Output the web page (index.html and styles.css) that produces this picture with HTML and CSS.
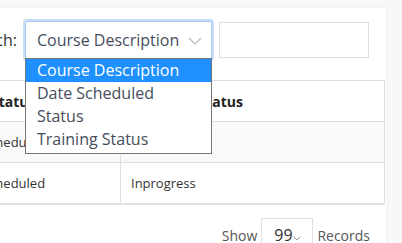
FILE: index.html
```html
<!DOCTYPE html>
<html lang="en">
<head>
    <meta charset="UTF-8">
    <meta name="viewport" content="width=device-width, initial-scale=1.0">
    <title>Training Records</title>
    <link rel="stylesheet" href="styles.css">
</head>
<body>

    <div class="card">
        <div class="search-row">
            <label class="search-label" for="searchText">Search:</label>
            <div class="select-wrap">
                <div class="select-box">
                    <span>Course Description</span>
                    <svg class="chevron" width="14" height="8" viewBox="0 0 14 8"><path d="M1 1 L7 7 L13 1" fill="none" stroke="#b5bcc6" stroke-width="1.2"/></svg>
                </div>
                <ul class="options">
                    <li class="selected">Course Description</li>
                    <li>Date Scheduled</li>
                    <li>Status</li>
                    <li>Training Status</li>
                </ul>
            </div>
            <input type="text" id="searchText" class="search-input">
        </div>

        <table class="records">
            <thead>
                <tr>
                    <th class="col-status">Status</th>
                    <th>Training Status</th>
                </tr>
            </thead>
            <tbody>
                <tr class="odd">
                    <td>Scheduled</td>
                    <td></td>
                </tr>
                <tr>
                    <td>Scheduled</td>
                    <td>Inprogress</td>
                </tr>
            </tbody>
        </table>

        <div class="footer">
            <span>Show</span>
            <div class="page-size">99<svg width="8" height="5" viewBox="0 0 8 5"><path d="M0.5 0.5 L4 4 L7.5 0.5" fill="none" stroke="#999" stroke-width="1"/></svg></div>
            <span>Records</span>
        </div>
    </div>

</body>
</html>
```

FILE: styles.css
```css
body {
    margin: 0;
    background-color: #f8f8f8;
    font-family: "Open Sans", Arial, sans-serif;
    color: #333;
    overflow: hidden;
}
.card {
    background: white;
    margin: 8px 16px 0 -40px;
    box-shadow: 0px 0px 6px rgba(0, 0, 0, 0.04);
}
.search-row {
    display: flex;
    align-items: center;
    padding: 13px 17px 21px 0;
}
.search-label {
    font-size: 16px;
    color: #333;
    margin-left: -2px;
    width: 60px;
    text-align: right;
}
.select-wrap {
    position: relative;
    margin-left: 8px;
}
.select-box {
    height: 36px;
    border: 1px solid #a9c8ee;
    border-radius: 2px;
    box-shadow: 0 0 0 2px #c6def8;
    display: flex;
    align-items: center;
    justify-content: space-between;
    padding: 0 9px 0 11px;
    box-sizing: content-box;
    width: 165px;
    font-size: 16px;
    color: #454d5a;
}
.chevron {
    margin-top: 1px;
}
.options {
    position: absolute;
    top: 37px;
    left: 0;
    width: 185px;
    margin: 0;
    padding: 0 0 2px 0;
    list-style: none;
    background: white;
    border: 1px solid #767676;
    font-size: 16px;
    color: #454d5a;
    z-index: 2;
}
.options li {
    height: 23px;
    line-height: 23px;
    padding-left: 11px;
}
.options .selected {
    background: #1e90ff;
    color: white;
}
.search-input {
    margin-left: 7px;
    width: 148px;
    height: 34px;
    padding: 0;
    border: 1px solid #e0e0e0;
}
.records {
    width: calc(100% - 1px);
    border-collapse: collapse;
    font-size: 13px;
    border-top: 1px solid #ddd;
    border-right: 1px solid #ddd;
    border-bottom: 2px solid #e2e2e2;
}
.records th,
.records td {
    height: 40px;
    padding: 0 10px;
    text-align: left;
    border-bottom: 1px solid #ddd;
}
.records th {
    font-weight: bold;
    font-size: 14px;
    color: #222;
}
.records th + th,
.records td + td {
    border-left: 1px solid #ddd;
}
.records th.col-status {
    width: 119px;
    padding-left: 31px;
}
.records td:first-child {
    padding-left: 22px;
}
.records th + th {
    padding-left: 16px;
}
.odd td {
    background: #f9f9f9;
}
.footer {
    display: flex;
    justify-content: flex-end;
    align-items: center;
    gap: 4px;
    padding: 13px 16px 0 0;
    font-size: 14px;
    color: #555;
}
.page-size {
    width: 52px;
    height: 34px;
    border: 1px solid #e0e0e0;
    box-sizing: border-box;
    display: flex;
    align-items: center;
    justify-content: center;
    font-size: 16px;
    color: #333;
}
.page-size svg {
    margin-top: 6px;
}
```
